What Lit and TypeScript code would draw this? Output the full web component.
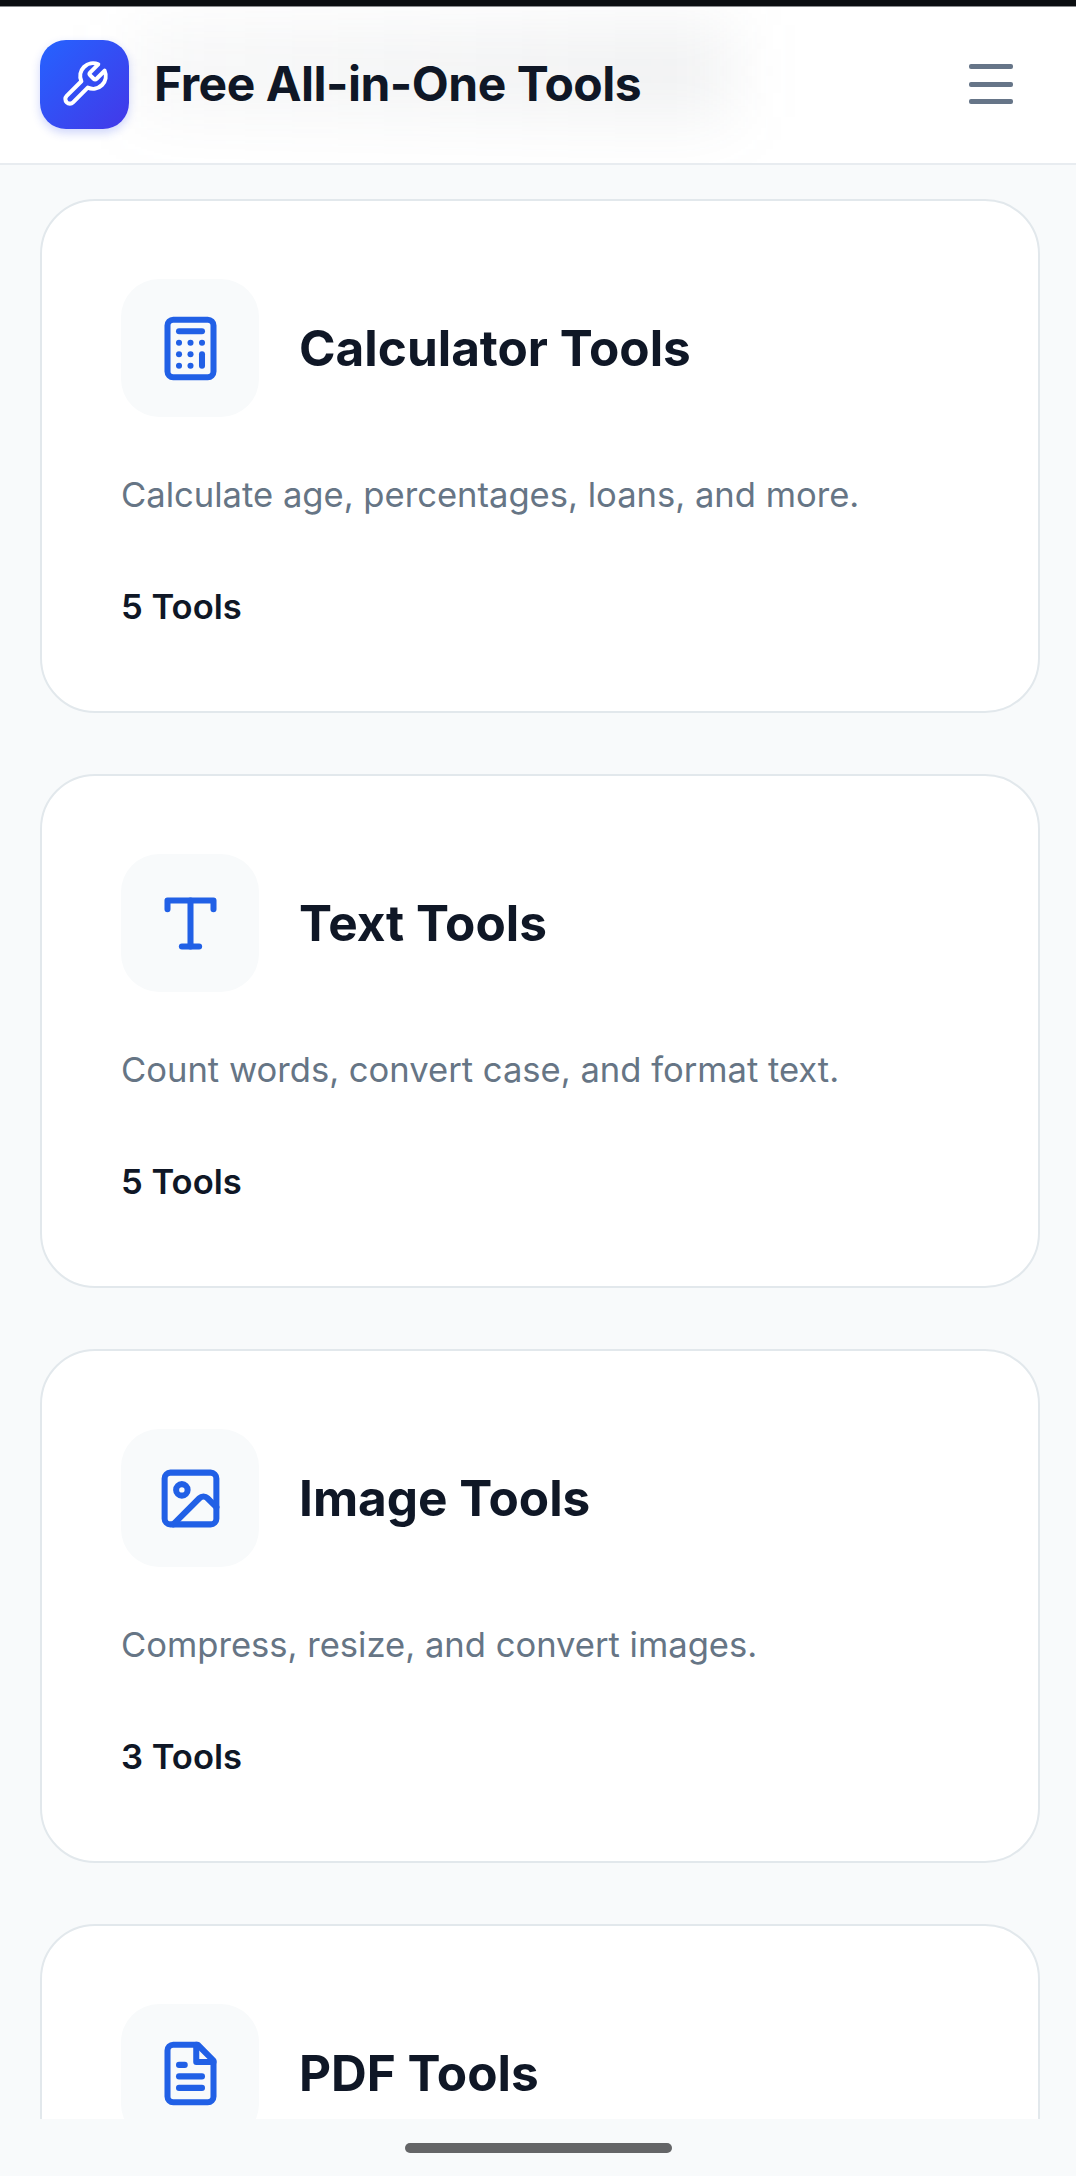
import { LitElement, html, css, svg } from "lit";
import { customElement } from "lit/decorators.js";

const icons: Record<string, unknown> = {
  calc: svg`<rect width="16" height="20" x="4" y="2" rx="2"/><line x1="8" x2="16" y1="6" y2="6"/><line x1="16" x2="16" y1="14" y2="18"/><path d="M16 10h.01"/><path d="M12 10h.01"/><path d="M8 10h.01"/><path d="M12 14h.01"/><path d="M8 14h.01"/><path d="M12 18h.01"/><path d="M8 18h.01"/>`,
  text: svg`<polyline points="4 7 4 4 20 4 20 7"/><line x1="9" x2="15" y1="20" y2="20"/><line x1="12" x2="12" y1="4" y2="20"/>`,
  image: svg`<rect width="18" height="18" x="3" y="3" rx="2"/><circle cx="9" cy="9" r="2"/><path d="m21 15-3.086-3.086a2 2 0 0 0-2.828 0L6 21"/>`,
  pdf: svg`<path d="M14.5 2H6a2 2 0 0 0-2 2v16a2 2 0 0 0 2 2h12a2 2 0 0 0 2-2V7.5L14.5 2z"/><polyline points="14 2 14 8 20 8"/><line x1="16" x2="8" y1="13" y2="13"/><line x1="16" x2="8" y1="17" y2="17"/><line x1="10" x2="8" y1="9" y2="9"/>`,
};

const cards = [
  { icon: "calc", title: "Calculator Tools", desc: "Calculate age, percentages, loans, and more.", count: "5 Tools" },
  { icon: "text", title: "Text Tools", desc: "Count words, convert case, and format text.", count: "5 Tools" },
  { icon: "image", title: "Image Tools", desc: "Compress, resize, and convert images.", count: "3 Tools" },
  { icon: "pdf", title: "PDF Tools", desc: "", count: "" },
];

@customElement("app-root")
export class AppRoot extends LitElement {
  static styles = css`
    :host {
      display: flex;
      flex-direction: column;
      height: 2176px;
      overflow: hidden;
      background: #f8fafb;
      font-family: Inter, "Liberation Sans", sans-serif;
    }
    .status {
      flex: none;
      height: 6px;
      background: #0b0e11;
      border-bottom: 1px solid #8a8c8f;
    }
    .header {
      flex: none;
      position: relative;
      box-sizing: border-box;
      height: 158px;
      padding: 0 63px 0 40px;
      display: flex;
      align-items: center;
      justify-content: space-between;
      background: #fff;
      border-bottom: 2px solid #e8ecf0;
      overflow: hidden;
    }
    .smear {
      position: absolute;
      left: 130px;
      top: 18px;
      width: 600px;
      height: 92px;
      background: linear-gradient(90deg, rgba(100, 110, 120, 0.05), rgba(100, 110, 120, 0.1));
      filter: blur(34px);
    }
    .brand {
      position: relative;
      display: flex;
      align-items: center;
      gap: 25px;
      margin-top: -2px;
    }
    .logo {
      width: 89px;
      height: 89px;
      border-radius: 26px;
      display: flex;
      align-items: center;
      justify-content: center;
      background: linear-gradient(135deg, #2563ff, #4338e8);
      box-shadow: 0 4px 10px rgba(37, 70, 235, 0.22);
    }
    .logo svg {
      width: 51px;
      height: 51px;
      fill: none;
      stroke: #fff;
      stroke-width: 1.9;
      stroke-linecap: round;
      stroke-linejoin: round;
    }
    .name {
      font-size: 48px;
      font-weight: 700;
      letter-spacing: -0.5px;
      line-height: 56px;
      color: #0f1726;
    }
    .menu {
      position: relative;
      display: flex;
      flex-direction: column;
      gap: 12.5px;
      width: 44px;
      margin-top: -2px;
    }
    .menu span {
      display: block;
      height: 5px;
      border-radius: 2px;
      background: #667588;
    }
    .main {
      flex: 1;
      min-height: 0;
      overflow: hidden;
      padding: 34px 36px 0 40px;
      display: flex;
      flex-direction: column;
      gap: 61px;
    }
    .card {
      flex: none;
      background: #fff;
      border: 2px solid #e2e8ec;
      border-radius: 55px;
      padding: 78px 79px 85px;
    }
    .head {
      display: flex;
      align-items: center;
      gap: 40px;
    }
    .box {
      flex: none;
      width: 138px;
      height: 138px;
      border-radius: 38px;
      background: #f8fafb;
      display: flex;
      align-items: center;
      justify-content: center;
    }
    .box svg {
      width: 69px;
      height: 69px;
      fill: none;
      stroke: #2160e6;
      stroke-width: 2.1;
      stroke-linecap: round;
      stroke-linejoin: round;
    }
    .title {
      font-size: 49.5px;
      font-weight: 700;
      line-height: 60px;
      color: #0f1726;
    }
    .desc {
      margin-top: 55px;
      font-size: 34.6px;
      line-height: 44px;
      color: #667585;
    }
    .count {
      margin-top: 70px;
      font-size: 34.6px;
      font-weight: 600;
      line-height: 40px;
      color: #0f1726;
    }
    .foot {
      flex: none;
      height: 57px;
      display: flex;
      justify-content: center;
      padding-top: 24px;
      box-sizing: border-box;
      background: #f8fafb;
    }
    .pill {
      width: 267px;
      height: 10px;
      border-radius: 5px;
      background: #646567;
    }
  `;

  render() {
    return html`
      <div class="status"></div>
      <header class="header">
        <div class="smear"></div>
        <div class="brand">
          <div class="logo">
            <svg viewBox="0 0 24 24"><path d="M14.7 6.3a1 1 0 0 0 0 1.4l1.6 1.6a1 1 0 0 0 1.4 0l3.77-3.77a6 6 0 0 1-7.94 7.94l-6.91 6.91a2.12 2.12 0 0 1-3-3l6.91-6.91a6 6 0 0 1 7.94-7.94l-3.76 3.76z"/></svg>
          </div>
          <div class="name">Free All-in-One Tools</div>
        </div>
        <div class="menu"><span></span><span></span><span></span></div>
      </header>
      <main class="main">
        ${cards.map(
          (c) => html`
            <section class="card">
              <div class="head">
                <div class="box"><svg viewBox="0 0 24 24">${icons[c.icon]}</svg></div>
                <div class="title">${c.title}</div>
              </div>
              ${c.desc ? html`<div class="desc">${c.desc}</div><div class="count">${c.count}</div>` : ""}
            </section>
          `
        )}
      </main>
      <footer class="foot"><div class="pill"></div></footer>
    `;
  }
}
